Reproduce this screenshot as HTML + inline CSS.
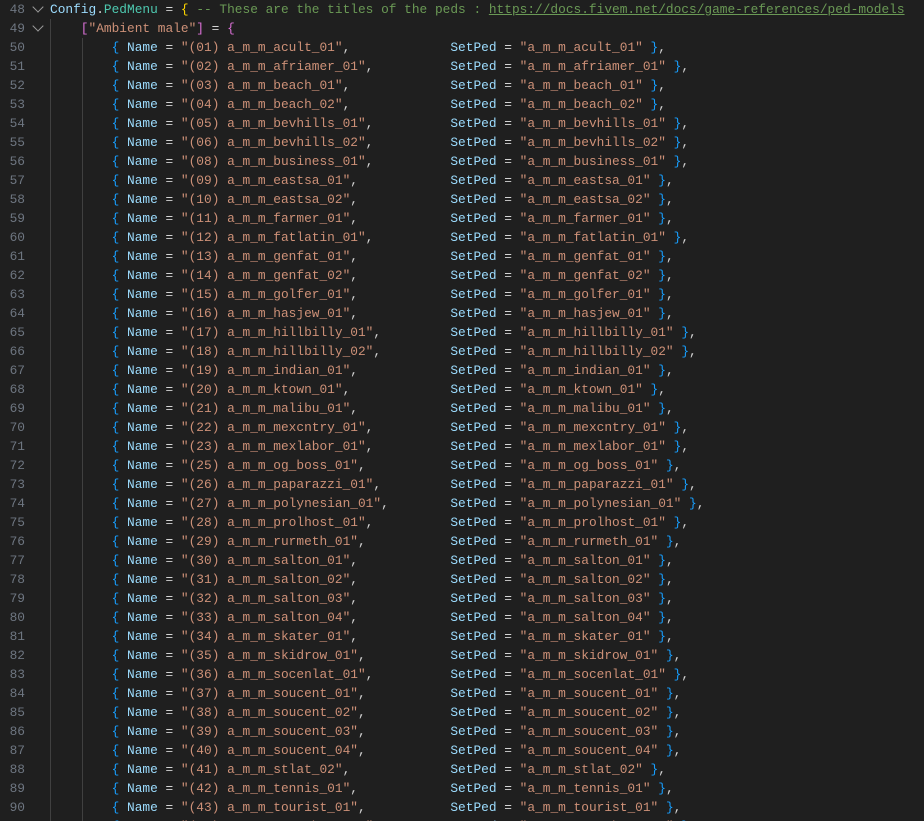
<!DOCTYPE html>
<html><head><meta charset="utf-8"><style>
html,body{margin:0;padding:0;background:#1f1f1f;width:924px;height:821px;overflow:hidden}
body{position:relative;font-family:"Liberation Mono",monospace;font-size:12.83px;}
.ln{position:absolute;left:0;width:25px;text-align:right;color:#6e7681;line-height:19px}
.code{position:absolute;left:50px;top:0;white-space:pre;line-height:19px;color:#d4d4d4}
.g{position:absolute;top:19px;width:1px;height:802px;background:#404040}
.ch{position:absolute;left:34px;width:7px;height:7px;border-right:1.3px solid #9a9a9a;border-bottom:1.3px solid #9a9a9a;transform:rotate(45deg)}
.v{color:#9cdcfe}.t{color:#4ec9b0}.s{color:#ce9178}.c{color:#6a9955}.u{color:#6a9955;text-decoration:underline}
.y{color:#ffd700}.p{color:#da70d6}.b{color:#179fff}
</style></head><body>
<div class="g" style="left:50px"></div>
<div class="g" style="left:82px;top:38px;height:783px"></div>
<div class="ch" style="top:3px"></div>
<div class="ch" style="top:22px"></div>
<div class="ln" style="top:0">48<br>49<br>50<br>51<br>52<br>53<br>54<br>55<br>56<br>57<br>58<br>59<br>60<br>61<br>62<br>63<br>64<br>65<br>66<br>67<br>68<br>69<br>70<br>71<br>72<br>73<br>74<br>75<br>76<br>77<br>78<br>79<br>80<br>81<br>82<br>83<br>84<br>85<br>86<br>87<br>88<br>89<br>90<br>91</div>
<div class="code"><span class="v">Config</span>.<span class="t">PedMenu</span> = <span class="y">{</span> <span class="c">-- These are the titles of the peds : </span><span class="u">https://docs.fivem.net/docs/game-references/ped-models</span>
    <span class="p">[</span><span class="s">"Ambient male"</span><span class="p">]</span> = <span class="p">{</span>
        <span class="b">{</span> <span class="v">Name</span> = <span class="s">"(01) a_m_m_acult_01"</span>,             <span class="v">SetPed</span> = <span class="s">"a_m_m_acult_01"</span> <span class="b">}</span>,
        <span class="b">{</span> <span class="v">Name</span> = <span class="s">"(02) a_m_m_afriamer_01"</span>,          <span class="v">SetPed</span> = <span class="s">"a_m_m_afriamer_01"</span> <span class="b">}</span>,
        <span class="b">{</span> <span class="v">Name</span> = <span class="s">"(03) a_m_m_beach_01"</span>,             <span class="v">SetPed</span> = <span class="s">"a_m_m_beach_01"</span> <span class="b">}</span>,
        <span class="b">{</span> <span class="v">Name</span> = <span class="s">"(04) a_m_m_beach_02"</span>,             <span class="v">SetPed</span> = <span class="s">"a_m_m_beach_02"</span> <span class="b">}</span>,
        <span class="b">{</span> <span class="v">Name</span> = <span class="s">"(05) a_m_m_bevhills_01"</span>,          <span class="v">SetPed</span> = <span class="s">"a_m_m_bevhills_01"</span> <span class="b">}</span>,
        <span class="b">{</span> <span class="v">Name</span> = <span class="s">"(06) a_m_m_bevhills_02"</span>,          <span class="v">SetPed</span> = <span class="s">"a_m_m_bevhills_02"</span> <span class="b">}</span>,
        <span class="b">{</span> <span class="v">Name</span> = <span class="s">"(08) a_m_m_business_01"</span>,          <span class="v">SetPed</span> = <span class="s">"a_m_m_business_01"</span> <span class="b">}</span>,
        <span class="b">{</span> <span class="v">Name</span> = <span class="s">"(09) a_m_m_eastsa_01"</span>,            <span class="v">SetPed</span> = <span class="s">"a_m_m_eastsa_01"</span> <span class="b">}</span>,
        <span class="b">{</span> <span class="v">Name</span> = <span class="s">"(10) a_m_m_eastsa_02"</span>,            <span class="v">SetPed</span> = <span class="s">"a_m_m_eastsa_02"</span> <span class="b">}</span>,
        <span class="b">{</span> <span class="v">Name</span> = <span class="s">"(11) a_m_m_farmer_01"</span>,            <span class="v">SetPed</span> = <span class="s">"a_m_m_farmer_01"</span> <span class="b">}</span>,
        <span class="b">{</span> <span class="v">Name</span> = <span class="s">"(12) a_m_m_fatlatin_01"</span>,          <span class="v">SetPed</span> = <span class="s">"a_m_m_fatlatin_01"</span> <span class="b">}</span>,
        <span class="b">{</span> <span class="v">Name</span> = <span class="s">"(13) a_m_m_genfat_01"</span>,            <span class="v">SetPed</span> = <span class="s">"a_m_m_genfat_01"</span> <span class="b">}</span>,
        <span class="b">{</span> <span class="v">Name</span> = <span class="s">"(14) a_m_m_genfat_02"</span>,            <span class="v">SetPed</span> = <span class="s">"a_m_m_genfat_02"</span> <span class="b">}</span>,
        <span class="b">{</span> <span class="v">Name</span> = <span class="s">"(15) a_m_m_golfer_01"</span>,            <span class="v">SetPed</span> = <span class="s">"a_m_m_golfer_01"</span> <span class="b">}</span>,
        <span class="b">{</span> <span class="v">Name</span> = <span class="s">"(16) a_m_m_hasjew_01"</span>,            <span class="v">SetPed</span> = <span class="s">"a_m_m_hasjew_01"</span> <span class="b">}</span>,
        <span class="b">{</span> <span class="v">Name</span> = <span class="s">"(17) a_m_m_hillbilly_01"</span>,         <span class="v">SetPed</span> = <span class="s">"a_m_m_hillbilly_01"</span> <span class="b">}</span>,
        <span class="b">{</span> <span class="v">Name</span> = <span class="s">"(18) a_m_m_hillbilly_02"</span>,         <span class="v">SetPed</span> = <span class="s">"a_m_m_hillbilly_02"</span> <span class="b">}</span>,
        <span class="b">{</span> <span class="v">Name</span> = <span class="s">"(19) a_m_m_indian_01"</span>,            <span class="v">SetPed</span> = <span class="s">"a_m_m_indian_01"</span> <span class="b">}</span>,
        <span class="b">{</span> <span class="v">Name</span> = <span class="s">"(20) a_m_m_ktown_01"</span>,             <span class="v">SetPed</span> = <span class="s">"a_m_m_ktown_01"</span> <span class="b">}</span>,
        <span class="b">{</span> <span class="v">Name</span> = <span class="s">"(21) a_m_m_malibu_01"</span>,            <span class="v">SetPed</span> = <span class="s">"a_m_m_malibu_01"</span> <span class="b">}</span>,
        <span class="b">{</span> <span class="v">Name</span> = <span class="s">"(22) a_m_m_mexcntry_01"</span>,          <span class="v">SetPed</span> = <span class="s">"a_m_m_mexcntry_01"</span> <span class="b">}</span>,
        <span class="b">{</span> <span class="v">Name</span> = <span class="s">"(23) a_m_m_mexlabor_01"</span>,          <span class="v">SetPed</span> = <span class="s">"a_m_m_mexlabor_01"</span> <span class="b">}</span>,
        <span class="b">{</span> <span class="v">Name</span> = <span class="s">"(25) a_m_m_og_boss_01"</span>,           <span class="v">SetPed</span> = <span class="s">"a_m_m_og_boss_01"</span> <span class="b">}</span>,
        <span class="b">{</span> <span class="v">Name</span> = <span class="s">"(26) a_m_m_paparazzi_01"</span>,         <span class="v">SetPed</span> = <span class="s">"a_m_m_paparazzi_01"</span> <span class="b">}</span>,
        <span class="b">{</span> <span class="v">Name</span> = <span class="s">"(27) a_m_m_polynesian_01"</span>,        <span class="v">SetPed</span> = <span class="s">"a_m_m_polynesian_01"</span> <span class="b">}</span>,
        <span class="b">{</span> <span class="v">Name</span> = <span class="s">"(28) a_m_m_prolhost_01"</span>,          <span class="v">SetPed</span> = <span class="s">"a_m_m_prolhost_01"</span> <span class="b">}</span>,
        <span class="b">{</span> <span class="v">Name</span> = <span class="s">"(29) a_m_m_rurmeth_01"</span>,           <span class="v">SetPed</span> = <span class="s">"a_m_m_rurmeth_01"</span> <span class="b">}</span>,
        <span class="b">{</span> <span class="v">Name</span> = <span class="s">"(30) a_m_m_salton_01"</span>,            <span class="v">SetPed</span> = <span class="s">"a_m_m_salton_01"</span> <span class="b">}</span>,
        <span class="b">{</span> <span class="v">Name</span> = <span class="s">"(31) a_m_m_salton_02"</span>,            <span class="v">SetPed</span> = <span class="s">"a_m_m_salton_02"</span> <span class="b">}</span>,
        <span class="b">{</span> <span class="v">Name</span> = <span class="s">"(32) a_m_m_salton_03"</span>,            <span class="v">SetPed</span> = <span class="s">"a_m_m_salton_03"</span> <span class="b">}</span>,
        <span class="b">{</span> <span class="v">Name</span> = <span class="s">"(33) a_m_m_salton_04"</span>,            <span class="v">SetPed</span> = <span class="s">"a_m_m_salton_04"</span> <span class="b">}</span>,
        <span class="b">{</span> <span class="v">Name</span> = <span class="s">"(34) a_m_m_skater_01"</span>,            <span class="v">SetPed</span> = <span class="s">"a_m_m_skater_01"</span> <span class="b">}</span>,
        <span class="b">{</span> <span class="v">Name</span> = <span class="s">"(35) a_m_m_skidrow_01"</span>,           <span class="v">SetPed</span> = <span class="s">"a_m_m_skidrow_01"</span> <span class="b">}</span>,
        <span class="b">{</span> <span class="v">Name</span> = <span class="s">"(36) a_m_m_socenlat_01"</span>,          <span class="v">SetPed</span> = <span class="s">"a_m_m_socenlat_01"</span> <span class="b">}</span>,
        <span class="b">{</span> <span class="v">Name</span> = <span class="s">"(37) a_m_m_soucent_01"</span>,           <span class="v">SetPed</span> = <span class="s">"a_m_m_soucent_01"</span> <span class="b">}</span>,
        <span class="b">{</span> <span class="v">Name</span> = <span class="s">"(38) a_m_m_soucent_02"</span>,           <span class="v">SetPed</span> = <span class="s">"a_m_m_soucent_02"</span> <span class="b">}</span>,
        <span class="b">{</span> <span class="v">Name</span> = <span class="s">"(39) a_m_m_soucent_03"</span>,           <span class="v">SetPed</span> = <span class="s">"a_m_m_soucent_03"</span> <span class="b">}</span>,
        <span class="b">{</span> <span class="v">Name</span> = <span class="s">"(40) a_m_m_soucent_04"</span>,           <span class="v">SetPed</span> = <span class="s">"a_m_m_soucent_04"</span> <span class="b">}</span>,
        <span class="b">{</span> <span class="v">Name</span> = <span class="s">"(41) a_m_m_stlat_02"</span>,             <span class="v">SetPed</span> = <span class="s">"a_m_m_stlat_02"</span> <span class="b">}</span>,
        <span class="b">{</span> <span class="v">Name</span> = <span class="s">"(42) a_m_m_tennis_01"</span>,            <span class="v">SetPed</span> = <span class="s">"a_m_m_tennis_01"</span> <span class="b">}</span>,
        <span class="b">{</span> <span class="v">Name</span> = <span class="s">"(43) a_m_m_tourist_01"</span>,           <span class="v">SetPed</span> = <span class="s">"a_m_m_tourist_01"</span> <span class="b">}</span>,
        <span class="b">{</span> <span class="v">Name</span> = <span class="s">"(44) a_m_m_trampbeac_01"</span>,         <span class="v">SetPed</span> = <span class="s">"a_m_m_trampbeac_01"</span> <span class="b">}</span>,</div>
</body></html>
